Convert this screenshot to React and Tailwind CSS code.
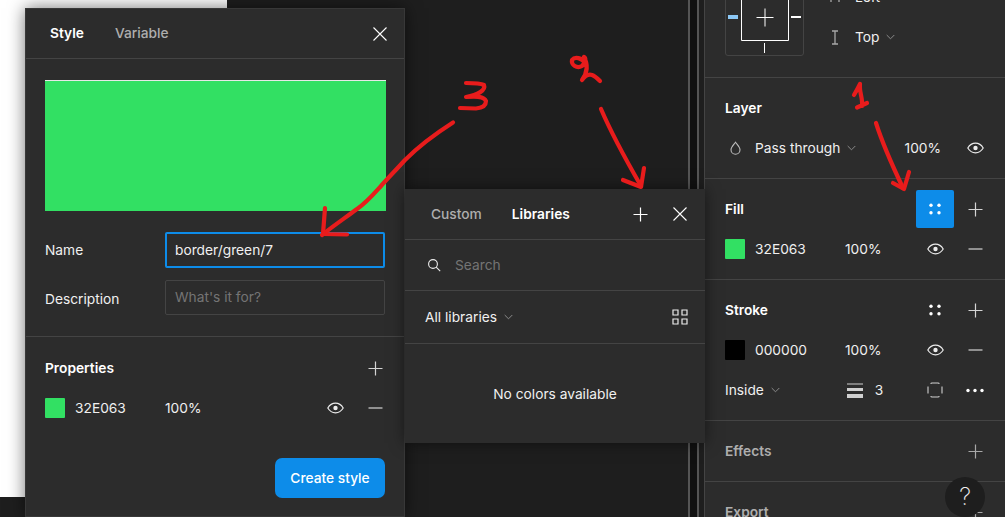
const Plus = ({ className = "text-[#d4d4d4]" }) => (
  <svg width="15" height="15" viewBox="0 0 15 15" className={className}>
    <path d="M7.5 0.5v14M0.5 7.5h14" stroke="currentColor" strokeWidth="1.2" fill="none" />
  </svg>
);

const Minus = () => (
  <svg width="15" height="15" viewBox="0 0 15 15" className="text-[#c8c8c8]">
    <path d="M0.5 7h14" stroke="currentColor" strokeWidth="1.3" fill="none" />
  </svg>
);

const Close = () => (
  <svg width="14" height="14" viewBox="0 0 14 14" className="text-white">
    <path d="M0.5 0.5l13 13M13.5 0.5l-13 13" stroke="currentColor" strokeWidth="1.1" fill="none" />
  </svg>
);

const Eye = () => (
  <svg width="17" height="12" viewBox="0 0 17 12" className="text-[#ececec]">
    <path d="M0.8 6C2.6 3 5.3 1.2 8.5 1.2S14.4 3 16.2 6C14.4 9 11.7 10.8 8.5 10.8S2.6 9 0.8 6Z" stroke="currentColor" strokeWidth="1.2" fill="none" />
    <circle cx="8.5" cy="6" r="2.2" fill="currentColor" />
  </svg>
);

const Dots = () => (
  <svg width="14" height="14" viewBox="0 0 14 14" className="text-white">
    <circle cx="3" cy="3.2" r="1.7" fill="currentColor" />
    <circle cx="11" cy="3.2" r="1.7" fill="currentColor" />
    <circle cx="3" cy="10.8" r="1.7" fill="currentColor" />
    <circle cx="11" cy="10.8" r="1.7" fill="currentColor" />
  </svg>
);

const Chevron = () => (
  <svg width="9" height="6" viewBox="0 0 9 6" className="text-[#8a8a8a]">
    <path d="M0.7 1l3.8 3.8L8.3 1" stroke="currentColor" strokeWidth="1" fill="none" />
  </svg>
);

const IconCell = ({ children }) => (
  <div className="w-10 h-10 flex items-center justify-center shrink-0">{children}</div>
);

const Swatch = ({ color }) => (
  <div className={`w-5 h-5 shrink-0 rounded-[1px] ${color}`} />
);

const SectionTitle = ({ title, muted, children }) => (
  <div className="h-10 flex items-center justify-between">
    <span className={`font-semibold ${muted ? "text-[#aeaeae]" : "text-white"}`}>{title}</span>
    <div className="flex">{children}</div>
  </div>
);

const ColorRow = ({ swatch, value, hexWidth }) => (
  <div className="h-10 flex items-center">
    <Swatch color={swatch} />
    <span className={`ml-[10px] ${hexWidth} text-[#f0f0f0]`}>{value}</span>
    <span className="flex-1 text-[#f0f0f0]">100%</span>
    <IconCell><Eye /></IconCell>
    <IconCell><Minus /></IconCell>
  </div>
);

const Section = ({ children }) => (
  <div className="pl-5 pr-[10px] py-[10px] border-b border-[#444444]">{children}</div>
);

function Sidebar() {
  return (
    <div className="w-[300px] shrink-0 h-full overflow-hidden bg-[#2c2c2c] shadow-[-1px_0_0_#444444] text-[13.75px]">
      <div className="h-[78px] border-b border-[#444444] pl-5 overflow-hidden flex items-end pb-[21px]">
        <div className="w-[79px] h-[70px] shrink-0 rounded-[3px] border border-[#444444]">
          <svg width="77" height="68" viewBox="0 0 77 68" className="text-white">
            <path d="M15.5 10v43.5h47V10" stroke="currentColor" strokeWidth="1" fill="none" />
            <path d="M30.500 30.500h17M39 21.500v18M38.500 56v10" stroke="currentColor" strokeWidth="1" fill="none" />
            <rect x="2" y="28" width="10" height="4" fill="#8cc8f5" />
            <rect x="65" y="29" width="10" height="2" fill="currentColor" />
          </svg>
        </div>
        <div className="ml-[26px] flex flex-col translate-y-[1px] text-[#f0f0f0]">
          <div className="h-10 flex items-center">
            <svg width="10" height="15" viewBox="0 0 10 15" className="text-[#a8a8a8]">
              <path d="M1 3v9M9 3v9M1 7.500h8" stroke="currentColor" strokeWidth="1.3" fill="none" />
            </svg>
            <span className="ml-[15px]">Left</span>
          </div>
          <div className="h-10 flex items-center">
            <svg width="10" height="15" viewBox="0 0 10 15" className="text-[#a8a8a8]">
              <path d="M2 1h6M5 1v13M2 14h6" stroke="currentColor" strokeWidth="1.3" fill="none" />
            </svg>
            <span className="ml-[15px] mr-[7px]">Top</span>
            <Chevron />
          </div>
        </div>
      </div>

      <Section>
        <SectionTitle title="Layer" />
        <div className="h-10 flex items-center">
          <div className="w-5 flex justify-center">
            <svg width="11" height="14" viewBox="0 0 11 14" className="text-[#bdbdbd]">
              <path d="M5.5 1.2C7 3.4 10 5.8 10 8.8A4.5 4.5 0 0 1 1 8.8C1 5.8 4 3.4 5.5 1.2Z" stroke="currentColor" strokeWidth="1.1" fill="none" />
            </svg>
          </div>
          <span className="ml-[10px] mr-[7px] text-[#f0f0f0]">Pass through</span>
          <Chevron />
          <span className="ml-auto mr-[14px] text-[#f0f0f0]">100%</span>
          <IconCell><Eye /></IconCell>
        </div>
      </Section>

      <Section>
        <SectionTitle title="Fill">
          <div className="w-[38px] h-[38px] mx-px my-px rounded-[2px] bg-[#0d8ce9] flex items-center justify-center">
            <Dots />
          </div>
          <IconCell><Plus /></IconCell>
        </SectionTitle>
        <ColorRow swatch="bg-[#32e063]" value="32E063" hexWidth="w-[90px]" />
      </Section>

      <Section>
        <SectionTitle title="Stroke">
          <IconCell><Dots /></IconCell>
          <IconCell><Plus /></IconCell>
        </SectionTitle>
        <ColorRow swatch="bg-black" value="000000" hexWidth="w-[90px]" />
        <div className="h-10 flex items-center text-[#f0f0f0]">
          <span className="mr-[7px]">Inside</span>
          <Chevron />
          <svg width="16" height="15" viewBox="0 0 16 15" className="ml-[67px] text-[#d0d0d0]">
            <rect y="0.5" width="16" height="1" fill="currentColor" />
            <rect y="5" width="16" height="3" fill="currentColor" />
            <rect y="11" width="16" height="4" fill="currentColor" />
          </svg>
          <span className="ml-[12px]">3</span>
          <div className="ml-auto flex">
            <IconCell>
              <svg width="16" height="16" viewBox="0 0 16 16" className="text-[#d0d0d0]">
                <path d="M4 2V1.500Q4 1 5 1H11Q12 1 12 1.500V2M4 14V14.500Q4 15 5 15H11Q12 15 12 14.500V14M1 4.500V11.500M15 4.500V11.500" stroke="currentColor" strokeWidth="1.1" fill="none" />
              </svg>
            </IconCell>
            <IconCell>
              <svg width="20" height="5" viewBox="0 0 20 5" className="text-white">
                <circle cx="3" cy="2.5" r="1.7" fill="currentColor" />
                <circle cx="10" cy="2.5" r="1.7" fill="currentColor" />
                <circle cx="17" cy="2.5" r="1.7" fill="currentColor" />
              </svg>
            </IconCell>
          </div>
        </div>
      </Section>

      <Section>
        <SectionTitle title="Effects" muted>
          <IconCell><Plus className="text-[#a8a8a8]" /></IconCell>
        </SectionTitle>
      </Section>

      <div className="pl-5 pr-[10px] pt-[10px]">
        <SectionTitle title="Export" muted>
          <IconCell><Plus className="text-[#a8a8a8]" /></IconCell>
        </SectionTitle>
      </div>
    </div>
  );
}

function StylePanel() {
  return (
    <div className="absolute left-[25px] top-2 w-[380px] h-[509px] bg-[#2c2c2c] border border-[#383838] shadow-[0_0_16px_rgba(0,0,0,0.55)] text-[13.75px]">
      <div className="h-[50px] border-b border-[#444444] flex items-center pl-6 pr-[17px]">
        <span className="font-semibold text-white">Style</span>
        <span className="ml-[31px] font-medium text-[#aeaeae]">Variable</span>
        <div className="ml-auto"><Close /></div>
      </div>

      <div className="pl-[19px] pr-[18px] pt-[21px]">
        <div className="h-[131px] w-[341px] bg-[#32e063] border-t border-[#e8e8e8]" />

        <div className="mt-[21px] flex items-center h-9">
          <span className="w-[120px] text-[#f0f0f0]">Name</span>
          <div className="w-[220px] h-9 rounded-[2px] border-2 border-[#0d8ce9] flex items-center pl-2 text-[#f0f0f0]">border/green/7</div>
        </div>
        <div className="mt-3 flex items-center h-[35px]">
          <span className="w-[120px] pt-[3px] text-[#f0f0f0]">Description</span>
          <div className="w-[220px] h-[35px] rounded-[2px] border border-[#444444] flex items-center pl-[9px] pb-px text-[#747474]">What's it for?</div>
        </div>
      </div>

      <div className="mt-[21px] border-t border-[#444444] pl-[19px] pr-[9px] pt-[11px]">
        <SectionTitle title="Properties">
          <IconCell><Plus /></IconCell>
        </SectionTitle>
        <div className="h-10 flex items-center">
          <Swatch color="bg-[#32e063]" />
          <span className="ml-[10px] w-[90px] text-[#f0f0f0]">32E063</span>
          <span className="flex-1 text-[#f0f0f0]">100%</span>
          <IconCell><Eye /></IconCell>
          <IconCell><Minus /></IconCell>
        </div>
      </div>

      <div className="flex justify-end pr-[19px] mt-[30px]">
        <div className="w-[110px] h-10 rounded-[7px] bg-[#0d8ce9] text-white font-medium flex items-center justify-center">Create style</div>
      </div>
    </div>
  );
}

function LibrariesPanel() {
  return (
    <div className="absolute left-[405px] top-[189px] w-[300px] h-[254px] bg-[#2c2c2c] shadow-[0_0_14px_rgba(0,0,0,0.5)] text-[13.75px]">
      <div className="h-[51px] border-b border-[#444444] flex items-center pl-[26px] pr-[5px]">
        <span className="font-medium text-[#aeaeae]">Custom</span>
        <span className="ml-[30px] font-semibold text-white">Libraries</span>
        <div className="ml-auto flex">
          <IconCell><Plus className="text-white" /></IconCell>
          <IconCell><Close /></IconCell>
        </div>
      </div>
      <div className="h-[51px] border-b border-[#444444] flex items-center pl-[22px]">
        <svg width="14" height="14" viewBox="0 0 14 14" className="text-[#ececec]">
          <circle cx="6" cy="6" r="4.4" stroke="currentColor" strokeWidth="1.1" fill="none" />
          <path d="M9.2 9.2l4 4" stroke="currentColor" strokeWidth="1.1" />
        </svg>
        <span className="ml-[14px] text-[#747474]">Search</span>
      </div>
      <div className="h-[53px] border-b border-[#444444] flex items-center pl-5 pr-[17px] text-[#f0f0f0]">
        <span className="mr-[7px]">All libraries</span>
        <Chevron />
        <svg width="16" height="16" viewBox="0 0 16 16" className="ml-auto text-[#ececec]">
          <path d="M1 1h5v5H1zM10 1h5v5h-5zM1 10h5v5H1zM10 10h5v5h-5z" stroke="currentColor" strokeWidth="1.2" fill="none" />
        </svg>
      </div>
      <div className="h-[99px] pt-[2px] flex items-center justify-center text-[#f0f0f0]">No colors available</div>
    </div>
  );
}

// red hand-drawn marks on top of the screenshot
function Annotations() {
  return (
    <svg width="1005" height="517" viewBox="0 0 1005 517" className="absolute left-0 top-0 pointer-events-none" fill="none" stroke="#e81c1c" strokeWidth="4.2" strokeLinecap="round" strokeLinejoin="round">
      <path d="M453 122.500C435 134 420 145 405 160C395 171 388 178 381 186C372 196 366 203 357 209C345 218 333 226 322 235" />
      <path d="M325 208L323 234L347 234.500" />
      <path d="M466 83C473 83 480 83 484 85C486 90 478 95 466 97C476 96 484 96 486 101C486 106 482 108 476 108.500L460 108" />
      <path d="M585 63C582 58 575 56 572 60C571 65 577 69 582 66C586 62 586 58 584 57C589 66 587 73 582 80C585 76 589 74 592 75C595 76 598 79 600 81" />
      <path d="M601 109C610 130 626 160 641 186" />
      <path d="M644 168L641 187L623 180" />
      <path d="M854 95C857 90 859 86 860 84C859 92 863 98 862 106M857 107.500L867 103" />
      <path d="M876 123C882 142 893 167 903 188" />
      <path d="M909 172L904 189L893 183" />
    </svg>
  );
}

export default function App() {
  return (
    <div className="relative w-[1005px] h-[517px] overflow-hidden flex bg-[#1e1e1e] font-['Inter',sans-serif]">
      <div className="flex-1 h-full flex justify-between">
        <div className="w-[227px] h-[497px] bg-white" />
        <div className="flex h-full">
          <div className="w-[11px] border-x-2 border-[#555555] bg-[#111111]" />
          <div className="w-[6px]" />
        </div>
      </div>
      <Sidebar />
      <StylePanel />
      <LibrariesPanel />
      <div className="absolute left-[945px] top-[477px] w-10 h-10 rounded-full bg-[#1e1e1e] text-[#f0f0f0] text-[24px] font-extralight flex items-center justify-center">?</div>
      <Annotations />
    </div>
  );
}
